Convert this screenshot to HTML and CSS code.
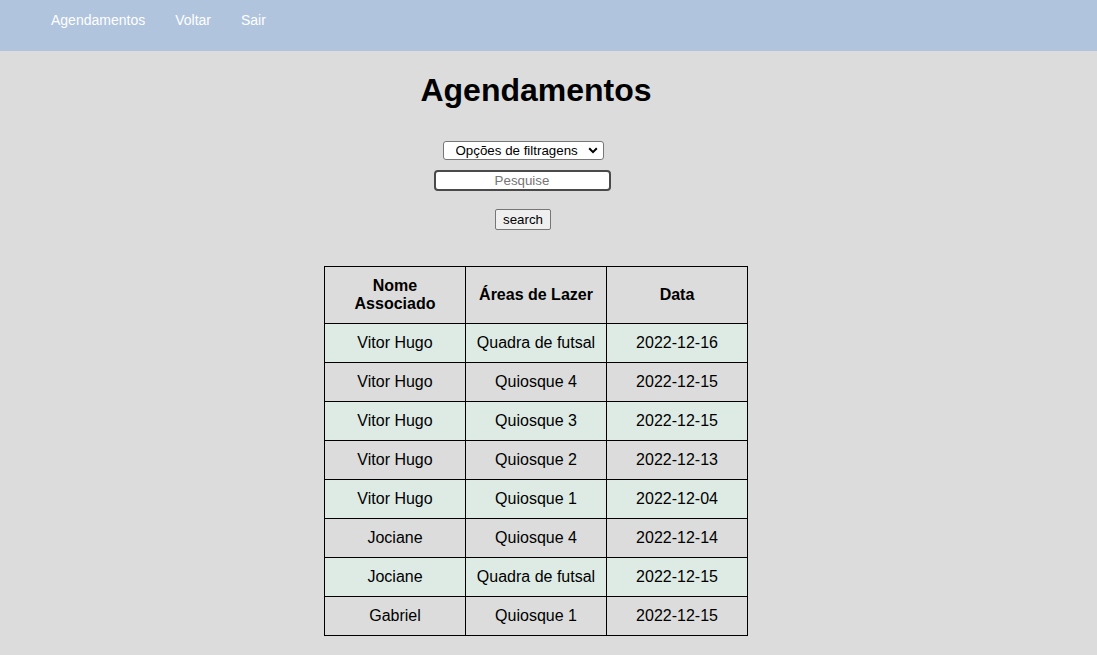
FILE: index.html
```html
<!DOCTYPE html>
<html lang="pt-BR">
<head>
<meta charset="utf-8">
<title>Agendamentos</title>
<link rel="stylesheet" href="styles.css">
</head>
<body>
<header class="topbar">
  <nav class="nav">
    <a href="#" class="nav-link">Agendamentos</a>
    <a href="#" class="nav-link">Voltar</a>
    <a href="#" class="nav-link">Sair</a>
  </nav>
</header>
<main class="main">
  <h1 class="title">Agendamentos</h1>
  <form class="filters">
    <div class="select-wrap">
      <select class="select">
        <option>Opções de filtragens</option>
      </select>
      <svg class="chevron" width="10" height="7" viewBox="0 0 10 7"><path d="M1.2 1.3 L5 5.1 L8.8 1.3" fill="none" stroke="#000" stroke-width="2"/></svg>
    </div>
    <input class="search-input" type="text" placeholder="Pesquise">
    <button class="search-btn" type="button">search</button>
  </form>
  <table class="grid">
    <thead>
      <tr><th>Nome Associado</th><th>Áreas de Lazer</th><th>Data</th></tr>
    </thead>
    <tbody>
      <tr class="alt"><td>Vitor Hugo</td><td>Quadra de futsal</td><td>2022-12-16</td></tr>
      <tr><td>Vitor Hugo</td><td>Quiosque 4</td><td>2022-12-15</td></tr>
      <tr class="alt"><td>Vitor Hugo</td><td>Quiosque 3</td><td>2022-12-15</td></tr>
      <tr><td>Vitor Hugo</td><td>Quiosque 2</td><td>2022-12-13</td></tr>
      <tr class="alt"><td>Vitor Hugo</td><td>Quiosque 1</td><td>2022-12-04</td></tr>
      <tr><td>Jociane</td><td>Quiosque 4</td><td>2022-12-14</td></tr>
      <tr class="alt"><td>Jociane</td><td>Quadra de futsal</td><td>2022-12-15</td></tr>
      <tr><td>Gabriel</td><td>Quiosque 1</td><td>2022-12-15</td></tr>
    </tbody>
  </table>
</main>
</body>
</html>
```
FILE: styles.css
```css
html, body {
  margin: 0;
  padding: 0;
}
body {
  background: #dcdcdc;
  font-family: "Liberation Sans", Arial, sans-serif;
  color: #000;
}
.topbar {
  background: #b0c4de;
  height: 51px;
  display: flex;
  align-items: flex-start;
}
.nav {
  display: flex;
  gap: 30px;
  padding: 12px 0 0 51px;
}
.nav-link {
  color: #fff;
  text-decoration: none;
  font-size: 14px;
  line-height: 17px;
}
.main {
  display: flex;
  flex-direction: column;
  align-items: center;
  padding-right: 25px;
}
.title {
  font-size: 32px;
  font-weight: bold;
  margin: 21px 0 0;
  line-height: 37px;
}
.filters {
  display: flex;
  flex-direction: column;
  align-items: center;
  margin-top: 32px;
  padding-right: 26px;
}
.select-wrap {
  position: relative;
  width: 161px;
  height: 19px;
}
.select {
  appearance: none;
  -webkit-appearance: none;
  width: 161px;
  height: 19px;
  box-sizing: border-box;
  border: 1px solid #767676;
  border-radius: 3px;
  background: #fff;
  font-family: "Liberation Sans", Arial, sans-serif;
  font-size: 13.33px;
  padding: 0 0 0 12px;
  color: #000;
  line-height: 17px;
}
.chevron {
  position: absolute;
  right: 6px;
  top: 6px;
}
.search-input {
  margin-top: 10px;
  margin-right: 2px;
  width: 177px;
  height: 21px;
  box-sizing: border-box;
  border: 2px solid #4a4a4a;
  border-radius: 4px;
  background: #fff;
  text-align: center;
  font-family: "Liberation Sans", Arial, sans-serif;
  font-size: 13.33px;
  padding: 0;
}
.search-input::placeholder {
  color: #757575;
}
.search-btn {
  margin-top: 18px;
  width: 56px;
  height: 21px;
  box-sizing: border-box;
  border: 1px solid #767676;
  border-radius: 2px;
  background: #efefef;
  font-family: "Liberation Sans", Arial, sans-serif;
  font-size: 13.33px;
  padding: 0;
  color: #000;
}
.grid {
  margin-top: 36px;
  border-collapse: collapse;
  font-size: 16px;
}
.grid th, .grid td {
  border: 1px solid #000;
  padding: 10px;
  width: 120px;
  text-align: center;
  line-height: 18px;
}
.grid th {
  font-weight: bold;
}
.grid tr.alt td {
  background: #deebe5;
}
```
